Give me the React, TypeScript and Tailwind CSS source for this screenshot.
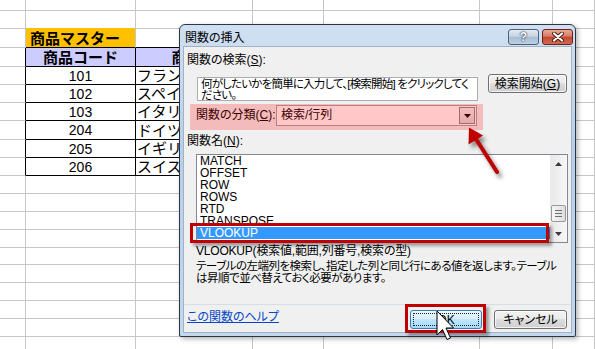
import clsx from "clsx";

const products = [
  { code: "101", name: "フランスワイン" },
  { code: "102", name: "スペインワイン" },
  { code: "103", name: "イタリアワイン" },
  { code: "204", name: "ドイツワイン" },
  { code: "205", name: "イギリスワイン" },
  { code: "206", name: "スイスワイン" },
];

const functionNames = ["MATCH", "OFFSET", "ROW", "ROWS", "RTD", "TRANSPOSE", "VLOOKUP"];

const winButton =
  "flex items-center justify-center rounded-[3px] border border-[#707070] bg-[linear-gradient(#f2f2f2,#ebebeb_45%,#dddddd_50%,#cfcfcf)] shadow-[inset_0_0_0_1px_rgba(255,255,255,0.75)]";

function cellText(r: number, c: number) {
  if (r === 2 && c === 1) return <span className="pl-[4px] text-[15px] font-bold">商品マスター</span>;
  if (r === 3 && c === 1) return <span className="w-full text-center text-[15px] font-bold">商品コード</span>;
  if (r === 3 && c === 2) return <span className="w-full text-center text-[15px] font-bold">商品名</span>;
  if (r >= 4 && r <= 9) {
    const p = products[r - 4];
    if (c === 1) return <span className="w-full text-center text-[14px]">{p.code}</span>;
    if (c === 2) return <span className="pl-[1px] text-[15px]">{p.name}</span>;
  }
  return null;
}

function Sheet() {
  const rows = Array.from({ length: 20 }, (_, i) => i);
  const cols = Array.from({ length: 7 }, (_, i) => i);
  return (
    <div className="grid grid-cols-[26px_110px_117px_71px_156px_73px_1fr] grid-rows-[11px_18px_19px_19px_18px_18px_18px_19px_18px_18px_18px_18px_18px_18px_17px_18px_18px_18px_18px_18px] font-['Liberation_Sans','Noto_Sans_CJK_JP',sans-serif] text-black">
      {rows.map((r) =>
        cols.map((c) => {
          const inTable = r >= 3 && r <= 9;
          const blackBottom = r >= 2 && r <= 9 && (c === 1 || c === 2);
          const blackRight = inTable && c <= 2;
          return (
            <div
              key={`${r}-${c}`}
              className={clsx(
                "flex items-center overflow-visible whitespace-nowrap border-r border-b leading-none",
                blackRight ? "border-r-black" : "border-r-[#c6c6c6]",
                blackBottom ? "border-b-black" : r === 1 && c === 1 ? "border-b-[#ffc000]" : "border-b-[#c6c6c6]",
                r === 2 && c === 1 && "bg-[#ffc000]",
                r === 3 && (c === 1 || c === 2) && "bg-[#ccccff]"
              )}
            >
              {cellText(r, c)}
            </div>
          );
        })
      )}
    </div>
  );
}

function Arrow({ up }: { up?: boolean }) {
  return (
    <svg width="7" height="4" viewBox="0 0 7 4">
      <path d={up ? "M0 4 L3.5 0 L7 4 Z" : "M0 0 L7 0 L3.5 4 Z"} fill="#3c3c3c" />
    </svg>
  );
}

function Dialog() {
  return (
    <div className="absolute left-[179px] top-[24px] flex h-[313px] w-[397px] flex-col rounded-t-[6px] rounded-b-[2px] border border-[#2c3642] bg-[linear-gradient(#d0e0f2,#b9cfe9_40%,#c3d7ee)] font-['Liberation_Sans','Noto_Sans_CJK_JP',sans-serif] text-[12px] text-black shadow-[2px_2px_5px_rgba(0,0,0,0.3)] [font-feature-settings:'palt']">
      {/* title bar */}
      <div className="flex h-[21px] items-start justify-between pl-[5px] pr-[2px]">
        <span className="pt-[5px] leading-[16px]">関数の挿入</span>
        <div className="flex gap-[3px] pt-[4px]">
          <div className="flex h-[16px] w-[31px] items-center justify-center rounded-[3px] border border-[#4f6177] bg-[linear-gradient(#e2eaf3,#c7d5e4_45%,#a9bcd2_50%,#bccfe3)] text-[12px] font-bold leading-none text-white [text-shadow:0_0_2px_#1d2c3c,0_0_1px_#1d2c3c]">
            ?
          </div>
          <div className="flex h-[16px] w-[31px] items-center justify-center rounded-[3px] border border-[#6b2419] bg-[linear-gradient(#eaa99b,#d67b66_45%,#c3472f_50%,#d06c51)]">
            <svg width="12" height="10" viewBox="0 0 12 10">
              <path d="M2 1.5 L10 8.5 M10 1.5 L2 8.5" stroke="#4a1a12" strokeWidth="4" strokeLinecap="round" />
              <path d="M2 1.5 L10 8.5 M10 1.5 L2 8.5" stroke="#ffffff" strokeWidth="2.2" strokeLinecap="round" />
            </svg>
          </div>
        </div>
      </div>

      {/* client area */}
      <div className="mx-[3px] mb-[3px] flex flex-1 flex-col border border-[#9fb2c8] bg-[#f0f0f0] pl-[3px] pr-[4px] pt-[6px]">
        <div className="leading-[14px]">
          関数の検索(<span className="underline">S</span>):
        </div>

        <div className="mt-[7px] flex items-start">
          <div className="ml-[10px] mt-[3px] h-[24px] w-[281px] overflow-hidden whitespace-nowrap border border-[#abadb3] bg-white px-[3px] text-[11.5px] leading-[11px] tracking-[-0.8px]">
            <div className="h-[11px] pt-[1px]">何がしたいかを簡単に入力して、[検索開始] をクリックしてく</div>
            <div className="h-[11px] pt-[1px]">ださい。</div>
          </div>
          <div className={clsx(winButton, "ml-[10px] h-[19px] w-[79px]")}>
            検索開始(<span className="underline">G</span>)
          </div>
        </div>

        <div className="relative ml-[3px] mt-[3px] flex h-[26px] w-[293px] items-start justify-between pl-[6px] pr-[6px] pt-[1px]">
          <span className="leading-[21px]">
            関数の分類(<span className="underline">C</span>):
          </span>
          <div className="relative h-[21px] w-[201px] border border-[#a5a5a5] bg-white pl-[4px] leading-[19px]">
            検索/行列
            <div className="absolute bottom-[1px] right-[1px] top-[1px] flex w-[16px] items-center justify-center border border-[#8b8b8b] bg-[linear-gradient(#f2f2f2,#dcdcdc)]">
              <svg width="7" height="4" viewBox="0 0 7 4">
                <path d="M0 0 L7 0 L3.5 4 Z" fill="#000" />
              </svg>
            </div>
          </div>
          <div className="absolute inset-0 bg-[rgba(255,0,0,0.22)]" />
        </div>

        <div className="mt-[4px] leading-[14px]">
          関数名(<span className="underline">N</span>):
        </div>

        <div className="relative ml-[9px] mt-[6px] h-[89px] w-[372px] border border-[#828790] bg-white">
          <div className="mr-[17px] text-[12px]">
            {functionNames.map((f) => (
              <div
                key={f}
                className={clsx("h-[12px] pl-[3px] leading-[12px]", f === "VLOOKUP" && "bg-[#3399ff] text-white")}
              >
                {f}
              </div>
            ))}
          </div>
          <div className="absolute bottom-0 right-0 top-0 flex w-[17px] flex-col items-center bg-[linear-gradient(to_right,#e8e8e8,#f7f7f7)]">
            <div className="flex h-[17px] items-center justify-center">
              <Arrow up />
            </div>
            <div className="flex-1" />
            <div className="flex h-[17px] w-[15px] flex-col items-center justify-center gap-[2px] rounded-[2px] border border-[#9a9a9a] bg-[linear-gradient(to_right,#f6f6f6,#dedede)]">
              <div className="h-px w-[7px] bg-[#6e6e6e]" />
              <div className="h-px w-[7px] bg-[#6e6e6e]" />
              <div className="h-px w-[7px] bg-[#6e6e6e]" />
            </div>
            <div className="h-[3px]" />
            <div className="flex h-[17px] items-center justify-center">
              <Arrow />
            </div>
          </div>
        </div>

        <div className="ml-[9px] mt-[1px] whitespace-nowrap leading-[14px] tracking-[-0.2px]">VLOOKUP(検索値,範囲,列番号,検索の型)</div>
        <div className="ml-[9px] mt-[2px] whitespace-nowrap text-[11.5px] leading-[12px] tracking-[-0.5px]">
          <div>テーブルの左端列を検索し、指定した列と同じ行にある値を返します。テーブル</div>
          <div>は昇順で並べ替えておく必要があります。</div>
        </div>

        <div className="-ml-[3px] -mr-[4px] mt-[20px] h-px bg-[#d5dde6]" />

        <div className="flex items-start pt-[5px]">
          <span className="leading-[14px] text-[#0646c8] underline">この関数のヘルプ</span>
          <div className="relative ml-auto flex h-[19px] w-[72px] items-center justify-center rounded-[3px] border border-[#3c7fb1] bg-[linear-gradient(#eaf6fd,#d9f0fc_45%,#bee6fd_50%,#a7d9f5)]">
            OK
            <div className="absolute inset-[2px] border border-dotted border-[#222]" />
          </div>
          <div className={clsx(winButton, "ml-[12px] h-[19px] w-[73px]")}>キャンセル</div>
        </div>
      </div>
    </div>
  );
}

export default function App() {
  return (
    <div className="relative h-[349px] w-[595px] overflow-hidden bg-white">
      <Sheet />
      <Dialog />

      {/* highlight around selected function */}
      <div className="absolute left-[190px] top-[223px] h-[20px] w-[359px] border-[3px] border-[#c00000] shadow-[3px_3px_3px_rgba(0,0,0,0.35)]" />
      {/* highlight around OK */}
      <div className="absolute left-[405px] top-[304px] h-[29px] w-[81px] border-[3px] border-[#c00000] shadow-[3px_3px_3px_rgba(0,0,0,0.35)]" />

      {/* red arrow pointing at the category dropdown */}
      <svg
        className="absolute left-[460px] top-[122px] drop-shadow-[3px_4px_2px_rgba(0,0,0,0.45)]"
        width="45"
        height="58"
        viewBox="460 122 45 58"
      >
        <path d="M476 139 L497 172" stroke="#c00000" strokeWidth="4" strokeLinecap="round" />
        <path d="M469 127.5 L468.5 144.5 L483 135.5 Z" fill="#c00000" />
      </svg>

      {/* mouse cursor */}
      <svg className="absolute left-[436px] top-[310px]" width="19" height="31" viewBox="0 0 19 31">
        <path
          d="M1 1 L1 25 L6.5 19.5 L11 29.5 L14.5 28 L10 18 L17.5 18 Z"
          fill="#ffffff"
          stroke="#000000"
          strokeWidth="1"
          strokeLinejoin="round"
        />
      </svg>
    </div>
  );
}
